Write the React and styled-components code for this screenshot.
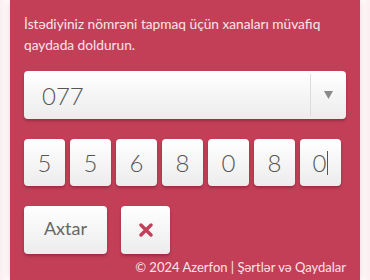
import styled, { createGlobalStyle } from "styled-components";

const GlobalStyle = createGlobalStyle`
  html, body {
    margin: 0;
    padding: 0;
    background: #fdf3f5;
    font-family: Lato, "Open Sans", sans-serif;
  }
`;

const Page = styled.div`
  width: 370px;
  height: 280px;
  overflow: hidden;
  display: flex;
  justify-content: center;
  background: linear-gradient(to right, #fbeef1 0px, #ffffff 8px, #ffffff 362px, #fbeef1 370px);
`;

const Panel = styled.div`
  width: 350px;
  background: #c33f58;
  box-shadow: 0 0 8px rgba(195, 63, 88, 0.25);
  padding: 13px 14px 0 14px;
  box-sizing: border-box;
  display: flex;
  flex-direction: column;
`;

const Intro = styled.p`
  margin: 0;
  color: #fbe3e8;
  font-size: 13.7px;
  line-height: 21px;
  font-weight: 400;
`;

const Select = styled.div`
  margin-top: 16px;
  height: 48px;
  border-radius: 4px;
  background: linear-gradient(#ffffff, #ececed);
  box-shadow: 0 2px 3px rgba(80, 10, 30, 0.35);
  display: flex;
  align-items: stretch;
`;

const SelectValue = styled.div`
  flex: 1;
  display: flex;
  align-items: center;
  padding-left: 18px;
  font-size: 24px;
  font-weight: 300;
  color: #555;
`;

const SelectArrow = styled.div`
  width: 35px;
  border-left: 1px solid #dcdcdc;
  margin: 3px 0;
  display: flex;
  align-items: center;
  justify-content: center;
`;

const Digits = styled.div`
  margin-top: 20px;
  display: flex;
  gap: 5px;
`;

const Digit = styled.div`
  width: 41px;
  height: 47px;
  border-radius: 4px;
  background: linear-gradient(#ffffff, #ececed);
  box-shadow: 0 2px 3px rgba(80, 10, 30, 0.35);
  display: flex;
  align-items: center;
  justify-content: center;
  font-size: 24px;
  font-weight: 300;
  color: #555;
`;

const Caret = styled.span`
  display: inline-block;
  width: 1px;
  height: 24px;
  background: #555;
  margin-left: 1px;
`;

const Buttons = styled.div`
  margin-top: 20px;
  display: flex;
  gap: 14px;
`;

const Button = styled.div`
  width: ${(p) => p.$w}px;
  height: 48px;
  border-radius: 4px;
  background: linear-gradient(#ffffff, #ececed);
  box-shadow: 0 2px 3px rgba(80, 10, 30, 0.35);
  display: flex;
  align-items: center;
  justify-content: center;
  font-size: 18px;
  color: #666;
  padding-bottom: ${(p) => (p.$pb ? p.$pb : 0)}px;
  box-sizing: border-box;
`;

const Footer = styled.div`
  margin-top: 5px;
  text-align: right;
  color: #fbe3e8;
  font-size: 13px;
`;

const digits = ["5", "5", "6", "8", "0", "8", "0"];

export default function App() {
  return (
    <>
      <GlobalStyle />
      <Page>
        <Panel>
          <Intro>
            İstədiyiniz nömrəni tapmaq üçün xanaları müvafiq qaydada doldurun.
          </Intro>
          <Select>
            <SelectValue>077</SelectValue>
            <SelectArrow>
              <svg width="9" height="8" viewBox="0 0 9 8">
                <path d="M0 0 L9 0 L4.5 8 Z" fill="#8a8a8a" />
              </svg>
            </SelectArrow>
          </Select>
          <Digits>
            {digits.map((d, i) => (
              <Digit key={i}>
                {d}
                {i === digits.length - 1 && <Caret />}
              </Digit>
            ))}
          </Digits>
          <Buttons>
            <Button $w={83} $pb={4}>Axtar</Button>
            <Button $w={49}>
              <svg width="14" height="14" viewBox="0 0 14 14">
                <path
                  d="M2 2 L12 12 M12 2 L2 12"
                  stroke="#c33f58"
                  strokeWidth="3.4"
                  strokeLinecap="round"
                />
              </svg>
            </Button>
          </Buttons>
          <Footer>© 2024 Azerfon | Şərtlər və Qaydalar</Footer>
        </Panel>
      </Page>
    </>
  );
}
